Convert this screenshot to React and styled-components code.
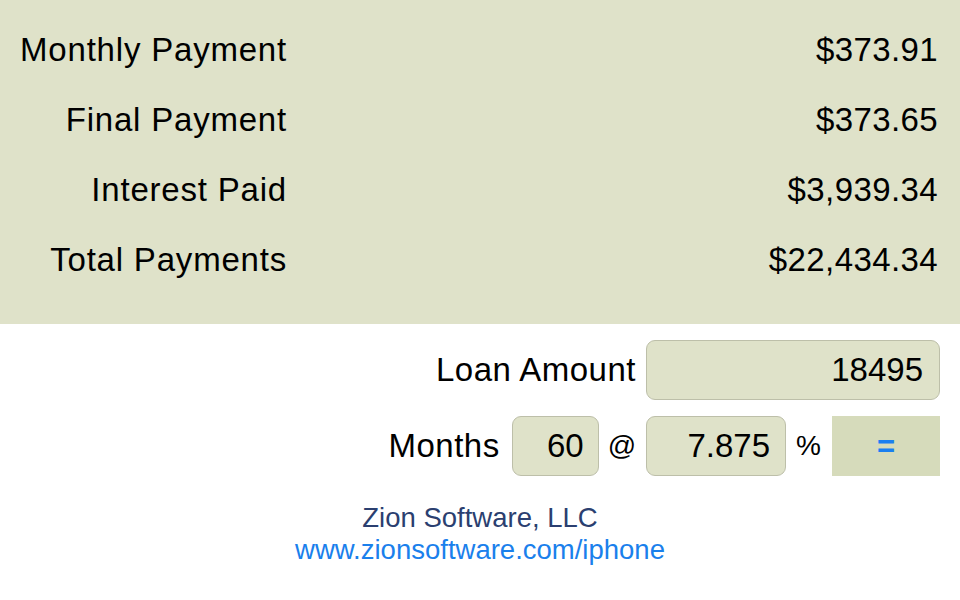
import { createGlobalStyle, styled } from "styled-components";

const GlobalStyle = createGlobalStyle`
  html, body {
    margin: 0;
    padding: 0;
    background: #ffffff;
  }
  body {
    font-family: "Liberation Sans", Arial, Helvetica, sans-serif;
    color: #000;
  }
`;

const Screen = styled.div`
  width: 960px;
  height: 600px;
  overflow: hidden;
  display: flex;
  flex-direction: column;
  background: #ffffff;
`;

const ResultsPanel = styled.section`
  background: #dfe2c9;
  padding: 15px 22px 29px 0;
  display: flex;
  flex-direction: column;
`;

const ResultRow = styled.div`
  display: grid;
  grid-template-columns: 287px 1fr;
  align-items: center;
  height: 70px;
  font-size: 33px;
`;

const ResultLabel = styled.span`
  text-align: right;
  letter-spacing: 0.8px;
`;

const ResultValue = styled.span`
  text-align: right;
  letter-spacing: 0.4px;
`;

const InputArea = styled.section`
  display: flex;
  flex-direction: column;
  align-items: flex-end;
  gap: 16px;
  padding: 16px 20px 0 0;
`;

const InputRow = styled.div`
  display: flex;
  align-items: center;
  height: 60px;
  font-size: 33px;
`;

const FieldLabel = styled.span`
  margin-right: ${(p) => p.$gap || 10}px;
  letter-spacing: 0.5px;
`;

const Field = styled.div`
  box-sizing: border-box;
  width: ${(p) => p.$width}px;
  height: 60px;
  display: flex;
  align-items: center;
  justify-content: flex-end;
  padding-right: ${(p) => p.$pad || 15}px;
  background: #dfe2c9;
  border: 1px solid #bdbfa9;
  border-radius: 9px;
  font-size: 33px;
`;

const Symbol = styled.span`
  margin: 0 ${(p) => p.$right}px 0 ${(p) => p.$left}px;
  font-size: 28px;
`;

const EqualsButton = styled.button`
  width: 108px;
  height: 60px;
  border: none;
  padding: 0;
  background: #d6dbbb;
  color: #1a7ff0;
  font-family: "Liberation Sans", Arial, sans-serif;
  font-weight: bold;
  font-size: 31px;
  line-height: 1;
  cursor: pointer;
`;

const Footer = styled.footer`
  margin-top: 26px;
  display: flex;
  flex-direction: column;
  align-items: center;
  font-size: 27.5px;
  line-height: 32px;
`;

const Company = styled.span`
  color: #2b3f70;
`;

const Link = styled.a`
  color: #1a80ec;
  text-decoration: none;
`;

const results = [
  { label: "Monthly Payment", value: "$373.91" },
  { label: "Final Payment", value: "$373.65" },
  { label: "Interest Paid", value: "$3,939.34" },
  { label: "Total Payments", value: "$22,434.34" },
];

export default function App() {
  return (
    <Screen>
      <GlobalStyle />
      <ResultsPanel>
        {results.map(({ label, value }) => (
          <ResultRow key={label}>
            <ResultLabel>{label}</ResultLabel>
            <ResultValue>{value}</ResultValue>
          </ResultRow>
        ))}
      </ResultsPanel>

      <InputArea>
        <InputRow>
          <FieldLabel>Loan Amount</FieldLabel>
          <Field $width={294} $pad={16}>18495</Field>
        </InputRow>
        <InputRow>
          <FieldLabel $gap={12}>Months</FieldLabel>
          <Field $width={87} $pad={14}>60</Field>
          <Symbol $left={9} $right={10}>@</Symbol>
          <Field $width={140} $pad={15}>7.875</Field>
          <Symbol $left={10} $right={11}>%</Symbol>
          <EqualsButton>=</EqualsButton>
        </InputRow>
      </InputArea>

      <Footer>
        <Company>Zion Software, LLC</Company>
        <Link href="#">www.zionsoftware.com/iphone</Link>
      </Footer>
    </Screen>
  );
}
